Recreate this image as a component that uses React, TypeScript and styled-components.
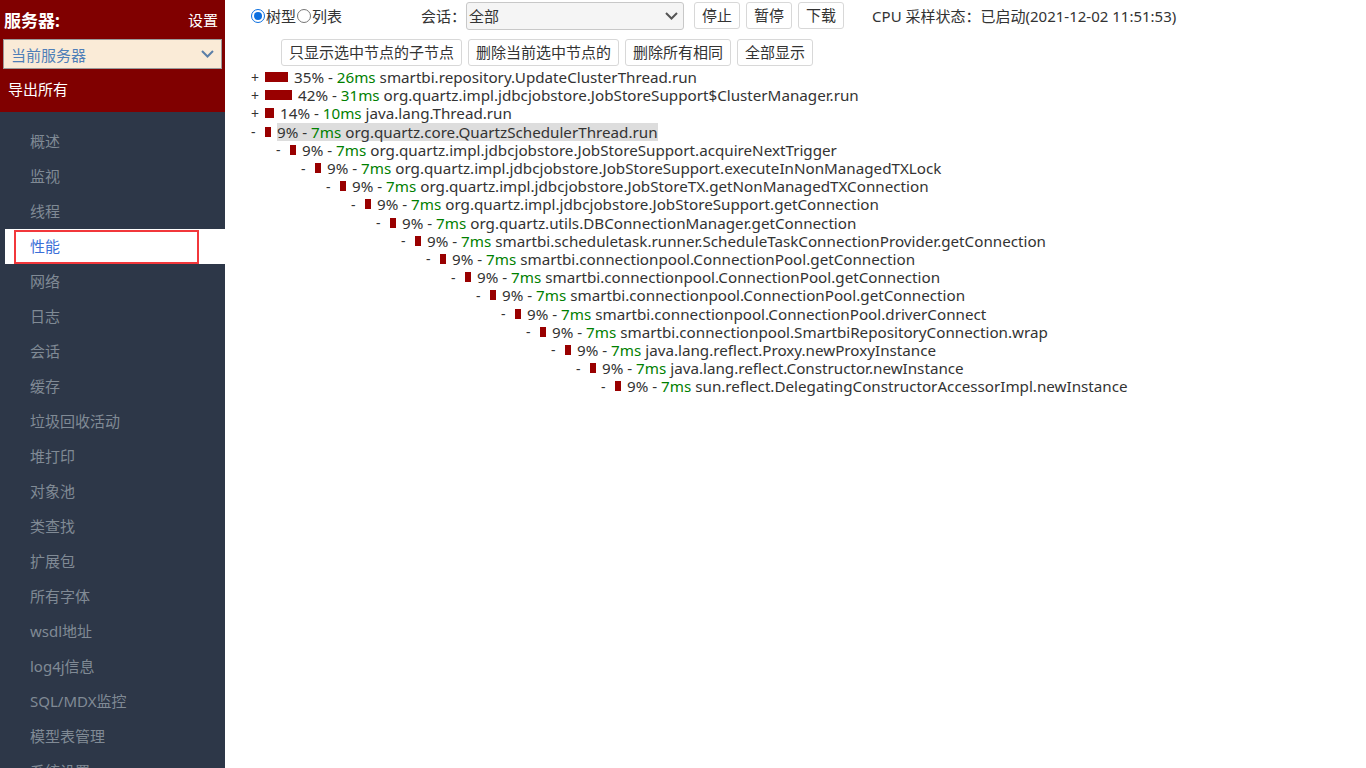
import { createGlobalStyle } from 'styled-components';
import styled from 'styled-components';

const GlobalStyle = createGlobalStyle`
  html, body {
    margin: 0;
    padding: 0;
    background: #fff;
    font-family: "Noto Sans", "Noto Sans CJK SC", sans-serif;
    font-size: 15px;
    color: #333;
    overflow: hidden;
  }
`;

type Node = { depth: number; open: boolean; pct: number; ms: number; name: string; selected?: boolean };

const nodes: Node[] = [
  { depth: 0, open: false, pct: 35, ms: 26, name: 'smartbi.repository.UpdateClusterThread.run' },
  { depth: 0, open: false, pct: 42, ms: 31, name: 'org.quartz.impl.jdbcjobstore.JobStoreSupport$ClusterManager.run' },
  { depth: 0, open: false, pct: 14, ms: 10, name: 'java.lang.Thread.run' },
  { depth: 0, open: true, pct: 9, ms: 7, name: 'org.quartz.core.QuartzSchedulerThread.run', selected: true },
  { depth: 1, open: true, pct: 9, ms: 7, name: 'org.quartz.impl.jdbcjobstore.JobStoreSupport.acquireNextTrigger' },
  { depth: 2, open: true, pct: 9, ms: 7, name: 'org.quartz.impl.jdbcjobstore.JobStoreSupport.executeInNonManagedTXLock' },
  { depth: 3, open: true, pct: 9, ms: 7, name: 'org.quartz.impl.jdbcjobstore.JobStoreTX.getNonManagedTXConnection' },
  { depth: 4, open: true, pct: 9, ms: 7, name: 'org.quartz.impl.jdbcjobstore.JobStoreSupport.getConnection' },
  { depth: 5, open: true, pct: 9, ms: 7, name: 'org.quartz.utils.DBConnectionManager.getConnection' },
  { depth: 6, open: true, pct: 9, ms: 7, name: 'smartbi.scheduletask.runner.ScheduleTaskConnectionProvider.getConnection' },
  { depth: 7, open: true, pct: 9, ms: 7, name: 'smartbi.connectionpool.ConnectionPool.getConnection' },
  { depth: 8, open: true, pct: 9, ms: 7, name: 'smartbi.connectionpool.ConnectionPool.getConnection' },
  { depth: 9, open: true, pct: 9, ms: 7, name: 'smartbi.connectionpool.ConnectionPool.getConnection' },
  { depth: 10, open: true, pct: 9, ms: 7, name: 'smartbi.connectionpool.ConnectionPool.driverConnect' },
  { depth: 11, open: true, pct: 9, ms: 7, name: 'smartbi.connectionpool.SmartbiRepositoryConnection.wrap' },
  { depth: 12, open: true, pct: 9, ms: 7, name: 'java.lang.reflect.Proxy.newProxyInstance' },
  { depth: 13, open: true, pct: 9, ms: 7, name: 'java.lang.reflect.Constructor.newInstance' },
  { depth: 14, open: true, pct: 9, ms: 7, name: 'sun.reflect.DelegatingConstructorAccessorImpl.newInstance' },
];

const menus = [
  '概述', '监视', '线程', '性能', '网络', '日志', '会话', '缓存', '垃圾回收活动', '堆打印',
  '对象池', '类查找', '扩展包', '所有字体', 'wsdl地址', 'log4j信息', 'SQL/MDX监控', '模型表管理', '系统设置',
];

const Page = styled.div`
  display: flex;
  width: 1366px;
  height: 768px;
`;

const Side = styled.div`
  width: 225px;
  flex-shrink: 0;
  background: #2d3748;
  display: flex;
  flex-direction: column;
`;

const SideHead = styled.div`
  background: #800000;
  height: 112px;
  flex-shrink: 0;
  padding: 8px 3px 0 3px;
  box-sizing: border-box;
`;

const HeadRow = styled.div`
  display: flex;
  justify-content: space-between;
  align-items: center;
  color: #fff;
  height: 22px;
  padding: 0 4px 0 1px;
`;

const HeadTitle = styled.span`
  font-size: 17px;
  font-weight: bold;
`;

const HeadLink = styled.span`
  font-size: 15px;
`;

const ServerSelect = styled.div`
  margin-top: 9px;
  height: 30px;
  box-sizing: border-box;
  border: 1px solid #9a9a9a;
  background: #faebd7;
  color: #4f7fb8;
  display: flex;
  align-items: center;
  justify-content: space-between;
  padding: 0 7px 0 7px;
  font-size: 15px;
`;

const ExportAll = styled.div`
  color: #fff;
  margin-top: 9px;
  padding-left: 5px;
  font-size: 15px;
`;

const Menu = styled.ul`
  list-style: none;
  margin: 0;
  padding: 12px 0 0 5px;
`;

const MenuItem = styled.li<{ $active?: boolean }>`
  position: relative;
  height: 35px;
  line-height: 35px;
  padding-left: 25px;
  font-size: 15px;
  color: ${(p) => (p.$active ? '#3a6fd8' : '#808a95')};
  background: ${(p) => (p.$active ? '#fff' : 'transparent')};
`;

const ActiveFrame = styled.span`
  position: absolute;
  left: 9px;
  top: 1px;
  width: 185px;
  height: 34px;
  border: 2px solid #f2373b;
  box-sizing: border-box;
`;

const Main = styled.div`
  flex: 1;
  padding: 2px 0 0 25px;
`;

const ToolBar = styled.div`
  display: flex;
  align-items: center;
  height: 27px;
`;

const RadioLabel = styled.label`
  display: inline-flex;
  align-items: center;
  font-size: 15px;
  color: #333;
`;

const Radio = styled.span<{ $on?: boolean }>`
  width: 14px;
  height: 14px;
  border-radius: 50%;
  box-sizing: border-box;
  border: ${(p) => (p.$on ? '1px solid #0b6fe0' : '1px solid #767676')};
  display: inline-flex;
  align-items: center;
  justify-content: center;
  margin: 0 1px 0 1px;
  &::after {
    content: '';
    display: ${(p) => (p.$on ? 'block' : 'none')};
    width: 8px;
    height: 8px;
    border-radius: 50%;
    background: #0b6fe0;
  }
`;

const SessionLabel = styled.span`
  margin-left: 79px;
  font-size: 15px;
  color: #333;
`;

const SessionSelect = styled.div`
  width: 218px;
  height: 28px;
  box-sizing: border-box;
  border: 1px solid #c8c8c8;
  border-radius: 3px;
  background: #f5f5f5;
  display: flex;
  align-items: center;
  justify-content: space-between;
  padding: 0 5px 0 2px;
  font-size: 15px;
  color: #333;
`;

const Btn = styled.button<{ $ml?: number }>`
  height: 27px;
  margin-left: ${(p) => p.$ml ?? 6}px;
  padding: 0 7px;
  border: 1px solid #d8d8d8;
  border-radius: 3px;
  background: #fff;
  font-family: inherit;
  font-size: 15px;
  color: #333;
  line-height: 25px;
`;

const Status = styled.span`
  margin-left: 28px;
  font-size: 15px;
  color: #333;
`;

const ToolBar2 = styled.div`
  display: flex;
  align-items: center;
  height: 27px;
  margin-top: 10px;
  padding-left: 31px;
`;

const Tree = styled.div`
  margin-top: 2px;
`;

const Row = styled.div<{ $depth: number }>`
  display: flex;
  align-items: center;
  height: 18.2px;
  padding-left: ${(p) => p.$depth * 25}px;
  white-space: nowrap;
  font-size: 15.2px;
`;

const Toggle = styled.span`
  width: 14px;
  flex-shrink: 0;
  color: #333;
  font-size: 14px;
  padding-left: 1px;
`;

const Bar = styled.span`
  display: inline-block;
  height: 10px;
  background: #990000;
  margin-right: 6px;
`;

const Label = styled.span<{ $sel?: boolean }>`
  background: ${(p) => (p.$sel ? '#ddd' : 'transparent')};
  line-height: 18px;
  color: #333;
`;

const Ms = styled.span`
  color: #008000;
`;

const Chevron = ({ color }: { color: string }) => (
  <svg width="13" height="8" viewBox="0 0 13 8">
    <path d="M1 1 L6.5 6.5 L12 1" fill="none" stroke={color} strokeWidth="2" />
  </svg>
);

export default function App() {
  return (
    <>
      <GlobalStyle />
      <Page>
        <Side>
          <SideHead>
            <HeadRow>
              <HeadTitle>服务器:</HeadTitle>
              <HeadLink>设置</HeadLink>
            </HeadRow>
            <ServerSelect>
              <span>当前服务器</span>
              <Chevron color="#5b7fa8" />
            </ServerSelect>
            <ExportAll>导出所有</ExportAll>
          </SideHead>
          <Menu>
            {menus.map((m) => (
              <MenuItem key={m} $active={m === '性能'}>
                {m === '性能' && <ActiveFrame />}
                {m}
              </MenuItem>
            ))}
          </Menu>
        </Side>
        <Main>
          <ToolBar>
            <RadioLabel>
              <Radio $on />
              树型
            </RadioLabel>
            <RadioLabel>
              <Radio />
              列表
            </RadioLabel>
            <SessionLabel>会话：</SessionLabel>
            <SessionSelect>
              <span>全部</span>
              <Chevron color="#555" />
            </SessionSelect>
            <Btn $ml={10}>停止</Btn>
            <Btn>暂停</Btn>
            <Btn>下载</Btn>
            <Status>CPU 采样状态：已启动(2021-12-02 11:51:53)</Status>
          </ToolBar>
          <ToolBar2>
            <Btn $ml={0}>只显示选中节点的子节点</Btn>
            <Btn>删除当前选中节点的</Btn>
            <Btn>删除所有相同</Btn>
            <Btn>全部显示</Btn>
          </ToolBar2>
          <Tree>
            {nodes.map((n, i) => (
              <Row key={i} $depth={n.depth}>
                <Toggle>{n.open ? '-' : '+'}</Toggle>
                <Bar style={{ width: Math.max(4, Math.round(n.pct * 0.65)) }} />
                <Label $sel={n.selected}>
                  {n.pct}% - <Ms>{n.ms}ms</Ms> {n.name}
                </Label>
              </Row>
            ))}
          </Tree>
        </Main>
      </Page>
    </>
  );
}
